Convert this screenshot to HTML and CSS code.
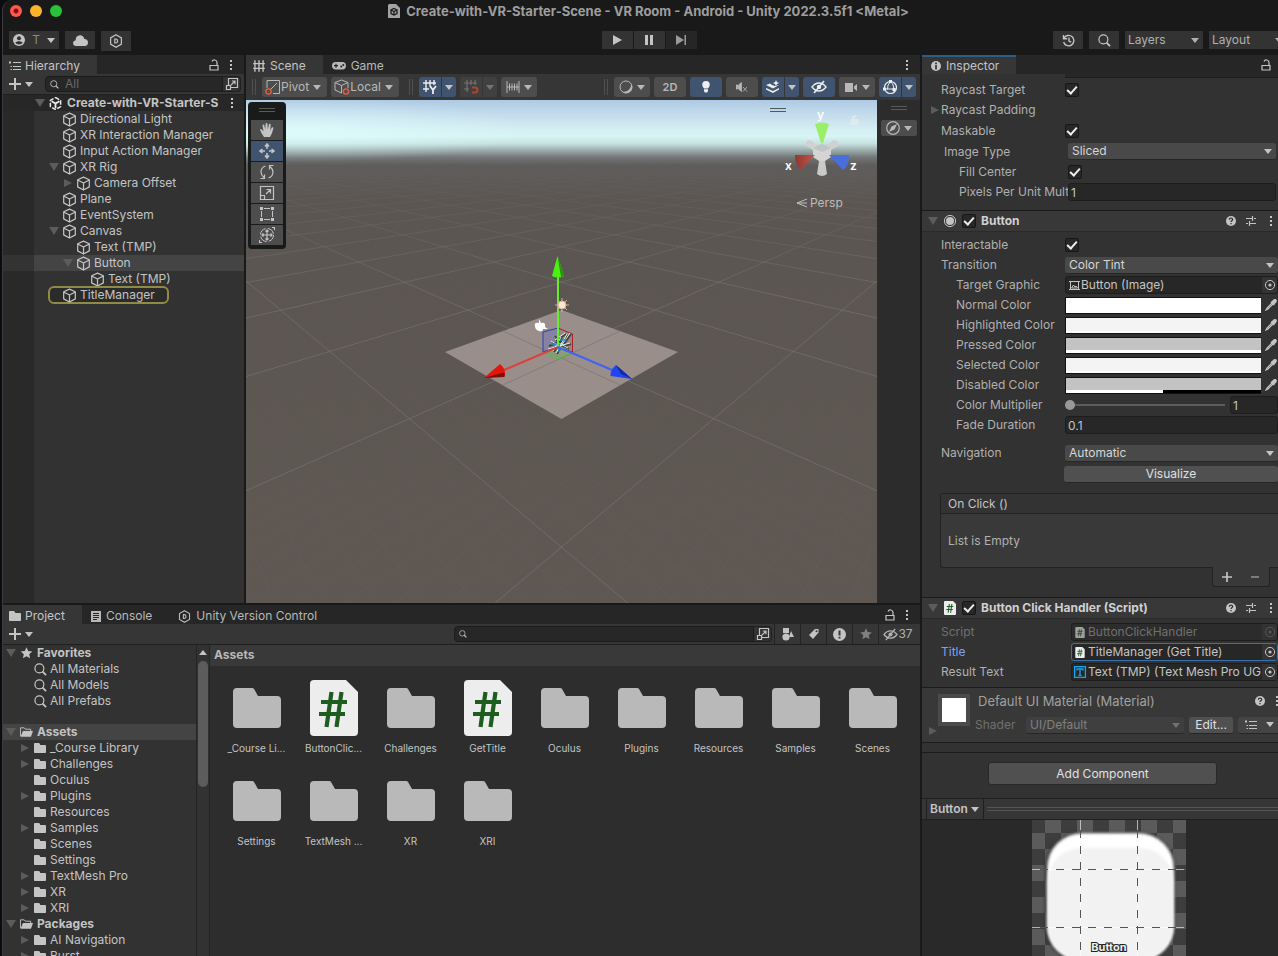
FILE: index.html
```html
<!DOCTYPE html>
<html lang="en">
<head>
<meta charset="utf-8">
<title>Create-with-VR-Starter-Scene - VR Room - Android - Unity 2022.3.5f1 &lt;Metal&gt;</title>
<link rel="stylesheet" href="styles.css">
</head>
<body>
<svg class="sprite" aria-hidden="true">
  <symbol id="cube" viewBox="0 0 16 16"><path d="M8 1.2 14.2 4v7.6L8 15 1.8 11.6V4zM1.8 4.2 8 7.4l6.200-3.200M8 7.400V15" fill="none" stroke="currentColor" stroke-width="1.300" stroke-linejoin="round"/></symbol>
  <symbol id="folder" viewBox="0 0 48 40"><path d="M4 0h15q1.500 0 2.200 1.300L25 8h19q4 0 4 4v24q0 4-4 4H4q-4 0-4-4V4q0-4 4-4z" fill="currentColor"/></symbol>
  <symbol id="folder-s" viewBox="0 0 12 10"><path d="M.8 0h4.400l1.200 2H11.200q.8 0 .8.800v6.400q0 .8-.8.800H.8Q0 10 0 9.200V.8Q0 0 .8 0z" fill="currentColor"/></symbol>
  <symbol id="folder-open" viewBox="0 0 14 11"><path d="M.5 10V1h4l1.200 1.500H11.500V4.500" fill="none" stroke="currentColor"/><path d="M3.200 4.500H14L11.800 10.500H.5z" fill="currentColor"/></symbol>
  <symbol id="script" viewBox="0 0 48 56"><path d="M4 0h32l12 12v40q0 4-4 4H4q-4 0-4-4V4q0-4 4-4z" fill="#ededed"/><path d="M21.500 12 16.500 47M31.500 12l-5 35M11 22h26M9 34h26" stroke="#1e5d20" stroke-width="4.200" fill="none"/></symbol>
  <symbol id="lens" viewBox="0 0 14 14"><circle cx="5.800" cy="5.800" r="4.800" fill="none" stroke="currentColor" stroke-width="1.300"/><path d="M9.200 9.200 13 13" stroke="currentColor" stroke-width="2"/></symbol>
  <symbol id="plus" viewBox="0 0 12 12"><path d="M6 0v12M0 6h12" stroke="currentColor" stroke-width="2"/></symbol>
  <symbol id="lock" viewBox="0 0 10 12"><path d="M1 6.500h8v4.500H1z M8 6V3.400A2.600 2.600 0 0 0 3 2.600" fill="none" stroke="currentColor" stroke-width="1.200"/></symbol>
  <symbol id="dots" viewBox="0 0 4 12"><path d="M1 1h2v2H1zM1 5h2v2H1zM1 9h2v2H1z" fill="currentColor"/></symbol>
  <symbol id="list" viewBox="0 0 12 10"><path d="M4 1.500h8M4 5.500h8M4 8.500h8M0 1.500h2M1.500 5.500h1.500M1.500 8.500h1.500M1 0v3" stroke="currentColor"/></symbol>
  <symbol id="pick" viewBox="0 0 14 14"><path d="M3.500 8V1.500h9v9H6M1.500 8.500h4v4h-4zM6 8l4-4M6.800 4H10v3.200" fill="none" stroke="currentColor" stroke-width="1.200"/></symbol>
  <symbol id="grid" viewBox="0 0 12 12"><path d="M2.500 1v10M6 1v10M9.500 1v10M1 4h10M1 8h10" stroke="currentColor" stroke-width="1.200"/></symbol>
  <symbol id="unity" viewBox="0 0 14 14"><path d="M7 .5 12.500 3.700v6.600L7 13.500 1.500 10.300V3.700z" fill="none" stroke="currentColor" stroke-width="1.600" stroke-dasharray="4.600 1.700"/><path d="M7 7V12M7 7 2.800 4.600M7 7l4.200-2.400" stroke="currentColor" stroke-width="2"/></symbol>
  <symbol id="hexd" viewBox="0 0 14 14"><path d="M7 .8 12.400 3.900v6.200L7 13.200 1.600 10.100V3.900z" fill="none" stroke="currentColor" stroke-width="1.200"/><path d="M5.800 5H7q1.600.2 1.600 2T7 9H5.800z" fill="none" stroke="currentColor" stroke-width="1.200"/></symbol>
  <symbol id="help" viewBox="0 0 12 12"><circle cx="6" cy="6" r="5" fill="currentColor"/><path d="M4.300 4.800Q4.400 3.200 6 3.200t1.700 1.300Q7.700 5.300 6.600 5.900 6 6.300 6 7.100M6 8v1.300" fill="none" stroke="#353535" stroke-width="1.300"/></symbol>
  <symbol id="sliders" viewBox="0 0 12 12"><path d="M1 3.500h6M9 3.500h2M7.500 1v5M1 8.500h2M5 8.500h6M4.500 6v5" stroke="currentColor" stroke-width="1.200"/></symbol>
  <symbol id="target" viewBox="0 0 12 12"><circle cx="6" cy="6" r="4.600" fill="none" stroke="currentColor"/><circle cx="6" cy="6" r="1.600" fill="currentColor"/></symbol>
  <symbol id="dropper" viewBox="0 0 12 12"><path d="M7.500 2.500 9 1q1-.8 1.800 0t0 1.800L9.500 4.300z M6 2.800l3.300 3.300" fill="currentColor" stroke="currentColor" stroke-width="1.400"/><path d="M7 4 2 9 1 11l2-1 5-5" fill="none" stroke="currentColor" stroke-width="1.200"/></symbol>
  <symbol id="star" viewBox="0 0 12 12"><path d="m6 .3 1.700 3.800 4.100.4-3.100 2.700.9 4.100L6 9.200l-3.600 2.100.9-4.100L.2 4.500l4.100-.4z" fill="currentColor"/></symbol>
  <symbol id="eye" viewBox="0 0 16 14"><path d="M1 7q3-4 7-4t7 4q-3 4-7 4T1 7z" fill="none" stroke="currentColor" stroke-width="1.400"/><circle cx="8" cy="7" r="2.200" fill="currentColor"/><path d="M3 13 13 1" stroke="currentColor" stroke-width="1.500"/></symbol>
</svg>

<div class="window">
  <header class="titlebar">
    <div class="lights"><i class="light red"></i><i class="light amber"></i><i class="light green"></i></div>
    <h1><svg width="12" height="14" viewBox="0 0 12 14"><path d="M1 0h7l4 4v10H0V1z" fill="#a3a3a3"/><path d="M6 4.500 9 6v3.500L6 11 3 9.500V6zM6 7.500V11M3 6l3 1.500L9 6" fill="none" stroke="#1c1c1c" stroke-width="1.300"/></svg>Create-with-VR-Starter-Scene - VR Room - Android - Unity 2022.3.5f1 &lt;Metal&gt;</h1>
  </header>

  <div class="mainbar">
    <div class="group">
      <button class="mb account"><svg width="12" height="12" viewBox="0 0 12 12"><circle cx="6" cy="6" r="6" fill="currentColor"/><circle cx="6" cy="4.300" r="2" fill="#333"/><path d="M2.200 8.800Q4 6.800 6 7.300q2-.5 3.800 1.500Q8.300 10.600 6 10.600T2.200 8.800z" fill="#333"/></svg><span>T</span><i class="caret"></i></button>
      <button class="mb" aria-label="Cloud"><svg width="15" height="11" viewBox="0 0 15 11"><path d="M3.500 11Q0 10.800 0 8q0-2.300 2.600-2.800Q2.800.5 7 .3q3.400 0 4.300 3.600Q15 4.300 15 7.500q0 3.300-3.200 3.500z" fill="currentColor"/></svg></button>
      <button class="mb tall" aria-label="Version Control"><svg width="14" height="14"><use href="#hexd"/></svg></button>
    </div>
    <div class="play">
      <button class="mb" aria-label="Play"><svg width="9" height="10" viewBox="0 0 9 10"><path d="M0 0v10l9-5z" fill="currentColor"/></svg></button>
      <button class="mb" aria-label="Pause"><svg width="8" height="10" viewBox="0 0 8 10"><path d="M0 0h3v10H0zM5 0h3v10H5z" fill="currentColor"/></svg></button>
      <button class="mb dim" aria-label="Step"><svg width="10" height="10" viewBox="0 0 10 10"><path d="M0 0v10l8-5zM8.500 0H10v10H8.500z" fill="currentColor"/></svg></button>
    </div>
    <div class="group end">
      <button class="mb" aria-label="Undo History"><svg width="13" height="13" viewBox="0 0 13 13"><path d="M2 4.200A5.200 5.200 0 1 1 1.600 8M1.500 1v3.700h3.700M7 3.500V7l2.200 1.200" fill="none" stroke="currentColor" stroke-width="1.400"/></svg></button>
      <button class="mb" aria-label="Search"><svg width="13" height="13"><use href="#lens"/></svg></button>
      <button class="mb menu">Layers<i class="caret"></i></button>
      <button class="mb menu">Layout<i class="caret"></i></button>
    </div>
  </div>

  <div class="workspace">
    <main class="left">
      <div class="upper">
        <section class="panel hierarchy">
          <div class="tabs"><button class="tab on"><svg width="12" height="10"><use href="#list"/></svg>Hierarchy</button>
            <span class="tabtools"><svg width="10" height="12"><use href="#lock"/></svg><svg width="4" height="12"><use href="#dots"/></svg></span></div>
          <div class="bar">
            <button class="add" aria-label="Create"><svg width="12" height="12"><use href="#plus"/></svg><i class="caret"></i></button>
            <label class="search"><svg width="9" height="9"><use href="#lens"/></svg><input type="text" placeholder="All" aria-label="Search hierarchy"></label>
            <button class="pickbtn" aria-label="Pick"><svg width="14" height="14"><use href="#pick"/></svg></button>
          </div>
          <div class="scenerow"><i class="down"></i><svg width="13" height="13"><use href="#unity"/></svg><b>Create-with-VR-Starter-S</b><svg width="4" height="12"><use href="#dots"/></svg></div>
          <ul class="tree objects">
            <li><svg><use href="#cube"/></svg>Directional Light</li>
            <li><svg><use href="#cube"/></svg>XR Interaction Manager</li>
            <li><svg><use href="#cube"/></svg>Input Action Manager</li>
            <li><i class="down"></i><svg><use href="#cube"/></svg>XR Rig</li>
            <li class="l1"><i class="right"></i><svg><use href="#cube"/></svg>Camera Offset</li>
            <li><svg><use href="#cube"/></svg>Plane</li>
            <li><svg><use href="#cube"/></svg>EventSystem</li>
            <li><i class="down"></i><svg><use href="#cube"/></svg>Canvas</li>
            <li class="l1"><svg><use href="#cube"/></svg>Text (TMP)</li>
            <li class="l1 sel"><i class="down"></i><svg><use href="#cube"/></svg>Button</li>
            <li class="l2"><svg><use href="#cube"/></svg>Text (TMP)</li>
            <li><span class="ping"><svg><use href="#cube"/></svg>TitleManager</span></li>
          </ul>
        </section>

        <section class="panel scene">
          <div class="tabs"><button class="tab on"><svg width="14" height="14"><use href="#grid"/></svg>Scene</button>
            <button class="tab"><svg width="14" height="8" viewBox="0 0 14 8"><rect width="14" height="7.500" rx="3.700" fill="currentColor"/><path d="M2 3.700h4M4 1.800v4" stroke="#262626" stroke-width="1.200"/><circle cx="9.300" cy="4.600" r="1" fill="#262626"/><circle cx="11.300" cy="3" r="1" fill="#262626"/></svg>Game</button>
            <span class="tabtools"><svg width="4" height="12"><use href="#dots"/></svg></span></div>
          <div class="scenebar">
            <i class="grip"></i>
            <button class="sb"><svg width="16" height="16" viewBox="0 0 16 16"><path d="M2 9V1.500h12.500v13H8M5 11l7-7" fill="none" stroke="currentColor"/><circle cx="3.500" cy="12.500" r="2.600" fill="none" stroke="#e8603c" stroke-width="1.400"/></svg>Pivot<i class="caret"></i></button>
            <button class="sb"><svg width="16" height="16" viewBox="0 0 16 16"><path d="M7.500 1 14 3.500V9M7.500 14 1 11V3.500L7.500 1M1 3.500 7.500 6.500 14 3.500M7.500 6.500V14" fill="none" stroke="currentColor"/><circle cx="12" cy="12.500" r="2.600" fill="none" stroke="#e8603c" stroke-width="1.400"/></svg>Local<i class="caret"></i></button>
            <i class="grip gap"></i>
            <span class="pair"><button class="sb on" aria-label="Grid"><svg width="16" height="16" viewBox="0 0 16 16"><path d="M4 1v12M8 1v6M12 1v5M1 4h13M1 10h6" stroke="currentColor" stroke-width="1.400"/><path d="m8 7 3 4 3-4M11 11v4" fill="none" stroke="currentColor" stroke-width="1.800"/></svg></button><button class="sb on car" aria-label="Grid options"><i class="caret"></i></button></span>
            <span class="pair off"><button class="sb" aria-label="Snap"><svg width="16" height="16" viewBox="0 0 16 16"><path d="M4 1v12M8 1v5M12 1v5M1 4h13M1 10h5" stroke="currentColor" stroke-width="1.200"/><path d="M9 8.500h3a2.500 2.500 0 0 1 0 5H9" fill="none" stroke="#a8492f" stroke-width="2"/></svg></button><button class="sb car" aria-label="Snap options"><i class="caret"></i></button></span>
            <button class="sb w36" aria-label="Increment"><svg width="14" height="14" viewBox="0 0 14 14"><path d="M1 1v12M13 1v12M3.500 3.500v7M6 3.500v7M8.500 3.500v7M11 3.500v7M1 7h12" stroke="currentColor"/></svg><i class="caret"></i></button>
            <i class="fill"></i>
            <i class="grip"></i>
            <button class="sb w36" aria-label="Shading"><svg width="14" height="14" viewBox="0 0 14 14"><circle cx="7" cy="7" r="6" fill="none" stroke="currentColor"/><path d="M11.500 3A6 6 0 1 1 3 11.500Q8 12.500 10.500 9T11.500 3z" fill="currentColor"/></svg><i class="caret"></i></button>
            <button class="sb w32"><b>2D</b></button>
            <button class="sb w32 on" aria-label="Lighting"><svg width="8" height="12" viewBox="0 0 8 12"><path d="M4 0q3.800.2 3.800 3.700Q7.800 5.500 6 7.500H2Q.2 5.500.2 3.700.2.200 4 0zM2 8.300h4v2L5 11.500H3L2 10.300z" fill="currentColor"/></svg></button>
            <button class="sb w32" aria-label="Audio"><svg width="12" height="10" viewBox="0 0 12 10"><path d="M0 3h1.500v4H0zM2.500 3 5.500.5v9L2.500 7zM7 5l4 4.500M11 5 7 9.500" fill="currentColor" stroke="currentColor" stroke-width=".8"/></svg></button>
            <span class="pair"><button class="sb on" aria-label="Effects"><svg width="14" height="14" viewBox="0 0 14 14"><path d="M0 5l4-1.500L6 5l3 1 4-1-6 3.500zM0 8l7 3 6-3v1.500L7 13 0 9.500z" fill="currentColor"/><path d="m10 0 1 2.300L13.300 3 11 4l-1 2-1-2-2.300-1L9 2.300z" fill="currentColor"/></svg></button><button class="sb on car" aria-label="Effects options"><i class="caret"></i></button></span>
            <button class="sb w32 on" aria-label="Visibility"><svg width="16" height="14"><use href="#eye"/></svg></button>
            <button class="sb w36" aria-label="Camera"><svg width="13" height="9" viewBox="0 0 13 9"><path d="M0 0h8v9H0zM9 3.500 12 1v7L9 5.500z" fill="currentColor"/></svg><i class="caret"></i></button>
            <span class="pair"><button class="sb on" aria-label="Gizmos"><svg width="15" height="15" viewBox="0 0 15 15"><circle cx="7.500" cy="7.500" r="6" fill="none" stroke="currentColor" stroke-width="1.200"/><path d="M1.500 9h12M7.500 1.500Q4 5 4.500 9.500M7.500 1.500Q11.500 5 11 12" fill="none" stroke="currentColor"/><path d="M6 0h3v3H6zM0 7.500h3v3H0zM9.500 8h3v3h-3z" fill="currentColor"/></svg></button><button class="sb on car" aria-label="Gizmo options"><i class="caret"></i></button></span>
          </div>
          <div class="sceneview">
            <div class="viewport">
              <svg class="world" viewBox="246 100 631 503" preserveAspectRatio="xMidYMid slice">
                <defs>
                  <linearGradient id="sky" gradientUnits="userSpaceOnUse" x1="0" y1="100" x2="0" y2="603">
                    <stop offset="0" stop-color="#aecae4"/><stop offset=".03" stop-color="#c4dcec"/><stop offset=".06" stop-color="#d6eff3"/><stop offset=".073" stop-color="#d6f4f5"/><stop offset=".087" stop-color="#c7e0e0"/><stop offset=".1" stop-color="#9cacac"/><stop offset=".114" stop-color="#727776"/><stop offset=".13" stop-color="#5f5d5c"/><stop offset=".2" stop-color="#5b5652"/><stop offset="1" stop-color="#5f5852"/>
                  </linearGradient>
                  <radialGradient id="glow" gradientUnits="userSpaceOnUse" cx="0" cy="0" r="1" gradientTransform="translate(300 130) scale(230 32)"><stop offset="0" stop-color="#dfffff" stop-opacity=".7"/><stop offset="1" stop-color="#dfffff" stop-opacity="0"/></radialGradient>
                  <linearGradient id="fade" gradientUnits="userSpaceOnUse" x1="0" y1="160" x2="0" y2="300"><stop offset="0" stop-color="#000"/><stop offset="1" stop-color="#fff"/></linearGradient>
                  <linearGradient id="fade2" gradientUnits="userSpaceOnUse" x1="0" y1="230" x2="0" y2="560"><stop offset="0" stop-color="#000"/><stop offset="1" stop-color="#fff"/></linearGradient>
                  <mask id="far" maskUnits="userSpaceOnUse" x="246" y="100" width="631" height="503"><path d="M246 100h631v503H246z" fill="url(#fade)"/></mask>
                  <mask id="near" maskUnits="userSpaceOnUse" x="246" y="100" width="631" height="503"><path d="M246 100h631v503H246z" fill="url(#fade2)"/></mask>
                  <linearGradient id="gx"><stop offset="0" stop-color="#8c3a31"/><stop offset="1" stop-color="#c95448"/></linearGradient>
                </defs>
                <path d="M-400 0h1900v900H-400z" fill="url(#sky)"/>
                <path d="M246 100h631v66H246z" fill="url(#glow)"/>
                <g mask="url(#near)"><path id="minor" fill="none" stroke="#7b7774" stroke-width="1" opacity=".13"/></g>
                <g mask="url(#far)"><path id="major" fill="none" stroke="#7b7774" stroke-width="1" opacity=".6"/></g>
                <path d="M561.500 310 678 352 561.500 419 445 352z" fill="#9a8e8b"/>
                <path d="M503 331 620 385M620 331 503 385" stroke="#857b78"/>
                <path d="M543 332 558 328 558 347 543 352z" fill="#7176b5" fill-opacity=".5" stroke="#2a3fc0"/>
                <path d="M558 328 572.500 334V352L558 347" fill="#a56a70" fill-opacity=".3" stroke="#a81f25"/>
                <path d="M546 353 558 347 571 353 558 359z" fill="#7fa777" fill-opacity=".6" stroke="#4cc32a"/>
                <path d="M556 341 566 334M568 335 557 354M571 334 562 347M549 350 571 344M552 342 567 351M549 346 562 341M554 352 562 338M560 344 569 349M555 336 562 345" fill="none" stroke="#3e4742" stroke-width="2"/>
                <path d="M555 340 565 333M567 334 556 353M570 333 561 346M548 349 570 343M551 341 566 350M553 351 561 337M559 343 568 348" fill="none" stroke="#d8efe6"/>
                <path d="M551 344h8v8M560 340h6" fill="none" stroke="#258ddc" stroke-width="1.500"/>
                <path d="M558 347V277" stroke="#63ee2b" stroke-width="2"/><path d="M557.500 256 564 276q-6 3-12 0z" fill="#4bf013"/><path d="M557.500 256 564 276l-3 1z" fill="#2b8f10"/>
                <path d="m558 347-54 23" stroke="#d9423c" stroke-width="2"/><path d="M484 378 500 364q6 5 5 12z" fill="#e2160c"/><path d="m484 378 20-5.500q1 3 .5 4.500z" fill="#7c0e0a"/>
                <path d="m558 347 54 23" stroke="#4263ee" stroke-width="2"/><path d="M632 379 616 365q-6 5-5.500 11z" fill="#1f45f5"/><path d="m632 379-16-14 5 9z" fill="#132a9c"/>
                <g stroke="#cdb09c" fill="#ffe6cd"><path d="M562 298v14M555 305h14M557 300l10 10M567 300l-10 10" /><circle cx="562" cy="305" r="4"/></g>
                <path d="M535 326q-1-4 4-3l0-4 2 4q5-1 4 4l3 2-5 0q0 3-4 2t-4-5z" fill="#fff"/>
                <path d="M770 108.500h16M770 111.500h16" stroke="#4d5a60"/>
                <g>
                  <path d="M806 142q4-4 7 0l7 6-3 5-7-5q-5-1-4-6z" fill="#d0d2d2"/><path d="M838 142q-4-4-7 0l-7 6 3 5 7-5q5-1 4-6z" fill="#d0d2d2"/>
                  <path d="M813 148 822 144l9 4v9l-9 6-9-6z" fill="#d4d4d4"/><path d="M813 148 822 144l9 4-9 4z" fill="#bfc4c4"/>
                  <path d="M819 161h6l2 13q-5 4-10 0z" fill="#c9caca"/>
                  <path d="M815 124q7-3 14 0l-6 19h-2z" fill="#9bee68"/>
                  <path d="M795 155h20l-14 15q-6-4-6-15z" fill="url(#gx)"/><path d="M849 155h-20l14 15q6-4 6-15z" fill="#4a6fdc"/>
                </g>
                <path d="M851 119.500h7v5h-7zM852.500 119v-2.500q2-2 4 0" fill="#e9eeee" stroke="#e9eeee" opacity=".7"/>
                <g class="axis"><text x="817" y="119">y</text><text x="785" y="170">x</text><text x="850" y="170">z</text></g>
                <path d="M807 199 797 203l10 4M797 203h10" fill="none" stroke="#c0bfbe"/>
                <text class="persp" x="810" y="207">Persp</text>
              </svg>
              <div class="tools">
                <i class="hgrip"></i>
                <button aria-label="View"><svg width="16" height="16" viewBox="0 0 16 16"><path d="M5 15Q2 11 1 7.500q.8-1 1.800 0L4.500 9.500 3.500 3q.8-1 1.700 0L6.300 7.500 6.600 1.500q.9-1 1.800 0l.4 6L10 2q1-.8 1.700.2L11.300 8.500l1.500-3q1-.7 1.700.2Q13.500 11 11 15z" fill="currentColor"/></svg></button>
                <button class="on" aria-label="Move"><svg width="16" height="16" viewBox="0 0 16 16"><path d="M8 2v4M8 10v4M2 8h4M10 8h4M6 3.500 8 1l2 2.500M6 12.500 8 15l2-2.500M3.500 6 1 8l2.500 2M12.500 6 15 8l-2.500 2" fill="none" stroke="currentColor" stroke-width="1.500"/></svg></button>
                <button aria-label="Rotate"><svg width="16" height="16" viewBox="0 0 16 16"><path d="M6.500 2Q2 3.500 2 8q0 3 3 5.500M9.500 14q4.500-1.500 4.500-6 0-3-3-5.500M1.500 14.500H5.500v-4M14.500 1.500H10.500v4" fill="none" stroke="currentColor" stroke-width="1.200"/></svg></button>
                <button aria-label="Scale"><svg width="16" height="16" viewBox="0 0 16 16"><path d="M1.500 1.500h13v13h-13zM1.500 10.500h4v4M7 9l4.500-4.500M7.500 4.500h4v4" fill="none" stroke="currentColor" stroke-width="1.200"/></svg></button>
                <button aria-label="Rect"><svg width="16" height="16" viewBox="0 0 16 16"><path d="M1 1h3v3H1zM12 1h3v3h-3zM1 12h3v3H1zM12 12h3v3h-3z" fill="currentColor"/><path d="M5 2.500h6M5 13.500h6M2.500 5v6M13.500 5v6" stroke="currentColor"/></svg></button>
                <button aria-label="Transform"><svg width="16" height="16" viewBox="0 0 16 16"><circle cx="8" cy="8" r="6.500" fill="none" stroke="currentColor" stroke-dasharray="8 2.200"/><path d="M8 3v10M3 8h10M6.500 4.500 8 3l1.500 1.500M6.500 11.500 8 13l1.500-1.500M4.500 6.500 3 8l1.500 1.500M11.500 6.500 13 8l-1.500 1.500M13 .5h2.500V3M.5 13v2.500H3" fill="none" stroke="currentColor" stroke-width="1.200"/></svg></button>
              </div>
            </div>
            <aside class="rail"><i class="hgrip"></i><button class="sb" aria-label="Orientation"><svg width="14" height="14" viewBox="0 0 14 14"><circle cx="7" cy="7" r="6.300" fill="none" stroke="currentColor" stroke-width="1.200"/><path d="M11 3 8.500 8.500 3 11 5.500 5.500z" fill="currentColor"/></svg><i class="caret"></i></button></aside>
          </div>
        </section>
      </div>

      <section class="panel project">
        <div class="tabs">
          <button class="tab on"><svg width="12" height="10"><use href="#folder-s"/></svg>Project</button>
          <button class="tab"><svg width="10" height="11" viewBox="0 0 10 11"><path d="M0 0h10v11H0z" fill="currentColor"/><path d="M2 2.500h6M2 4.500h6M2 6.500h6M2 8.500h4" stroke="#262626"/></svg>Console</button>
          <button class="tab vc"><svg width="13" height="13"><use href="#hexd"/></svg>Unity Version Control</button>
          <span class="tabtools"><svg width="10" height="12"><use href="#lock"/></svg><svg width="4" height="12"><use href="#dots"/></svg></span>
        </div>
        <div class="bar">
          <button class="add" aria-label="Create asset"><svg width="12" height="12"><use href="#plus"/></svg><i class="caret"></i></button>
          <i class="fill"></i>
          <label class="search wide"><svg width="8" height="8"><use href="#lens"/></svg><input type="text" aria-label="Search assets"></label>
          <button class="pickbtn" aria-label="Pick"><svg width="14" height="14"><use href="#pick"/></svg></button>
          <div class="filters">
            <button aria-label="Type"><svg width="12" height="13" viewBox="0 0 12 13"><path d="M1 0h6v5H1zM9 3l3 6H7z" fill="currentColor"/><circle cx="4" cy="9" r="3.600" fill="currentColor"/></svg></button>
            <button aria-label="Label"><svg width="12" height="12" viewBox="0 0 12 12"><path d="M7 1h3.500v3.500L5 11 1 7z" fill="currentColor"/><circle cx="8.500" cy="3.200" r="1" fill="#363636"/></svg></button>
            <button aria-label="Log"><svg width="13" height="13" viewBox="0 0 13 13"><circle cx="6.500" cy="6.500" r="6.500" fill="currentColor"/><path d="M6.500 2.500v5M6.500 8.800v1.800" stroke="#363636" stroke-width="2"/></svg></button>
            <button class="grey" aria-label="Favorite"><svg width="12" height="12"><use href="#star"/></svg></button>
            <button class="hidden-count"><svg width="15" height="13"><use href="#eye"/></svg>37</button>
          </div>
        </div>
        <div class="browser">
          <ul class="tree folders">
            <li class="root"><i class="down"></i><svg><use href="#star"/></svg>Favorites</li>
            <li class="query"><svg><use href="#lens"/></svg>All Materials</li>
            <li class="query"><svg><use href="#lens"/></svg>All Models</li>
            <li class="query"><svg><use href="#lens"/></svg>All Prefabs</li>
            <li class="root sel second"><i class="down"></i><svg><use href="#folder-open"/></svg>Assets</li>
            <li><i class="right"></i><svg><use href="#folder-s"/></svg>_Course Library</li>
            <li><i class="right"></i><svg><use href="#folder-s"/></svg>Challenges</li>
            <li><svg><use href="#folder-s"/></svg>Oculus</li>
            <li><i class="right"></i><svg><use href="#folder-s"/></svg>Plugins</li>
            <li><svg><use href="#folder-s"/></svg>Resources</li>
            <li><i class="right"></i><svg><use href="#folder-s"/></svg>Samples</li>
            <li><svg><use href="#folder-s"/></svg>Scenes</li>
            <li><svg><use href="#folder-s"/></svg>Settings</li>
            <li><i class="right"></i><svg><use href="#folder-s"/></svg>TextMesh Pro</li>
            <li><i class="right"></i><svg><use href="#folder-s"/></svg>XR</li>
            <li><i class="right"></i><svg><use href="#folder-s"/></svg>XRI</li>
            <li class="root"><i class="down"></i><svg><use href="#folder-open"/></svg>Packages</li>
            <li><i class="right"></i><svg><use href="#folder-s"/></svg>AI Navigation</li>
            <li><i class="right"></i><svg><use href="#folder-s"/></svg>Burst</li>
          </ul>
          <div class="scroll"><i class="up"></i><i class="thumb"></i></div>
          <div class="assets">
            <div class="crumb">Assets</div>
            <div class="items">
              <figure><svg class="fo"><use href="#folder"/></svg><figcaption>_Course Li...</figcaption></figure>
              <figure><svg class="sc"><use href="#script"/></svg><figcaption>ButtonClic...</figcaption></figure>
              <figure><svg class="fo"><use href="#folder"/></svg><figcaption>Challenges</figcaption></figure>
              <figure><svg class="sc"><use href="#script"/></svg><figcaption>GetTitle</figcaption></figure>
              <figure><svg class="fo"><use href="#folder"/></svg><figcaption>Oculus</figcaption></figure>
              <figure><svg class="fo"><use href="#folder"/></svg><figcaption>Plugins</figcaption></figure>
              <figure><svg class="fo"><use href="#folder"/></svg><figcaption>Resources</figcaption></figure>
              <figure><svg class="fo"><use href="#folder"/></svg><figcaption>Samples</figcaption></figure>
              <figure><svg class="fo"><use href="#folder"/></svg><figcaption>Scenes</figcaption></figure>
              <figure><svg class="fo"><use href="#folder"/></svg><figcaption>Settings</figcaption></figure>
              <figure><svg class="fo"><use href="#folder"/></svg><figcaption>TextMesh ...</figcaption></figure>
              <figure><svg class="fo"><use href="#folder"/></svg><figcaption>XR</figcaption></figure>
              <figure><svg class="fo"><use href="#folder"/></svg><figcaption>XRI</figcaption></figure>
            </div>
          </div>
        </div>
      </section>
    </main>

    <aside class="panel inspector">
      <div class="tabs"><button class="tab on focus"><svg width="10" height="10" viewBox="0 0 10 10"><circle cx="5" cy="5" r="5" fill="currentColor"/><path d="M5 1.500v1.700M5 4v4.500" stroke="#363636" stroke-width="1.700"/></svg>Inspector</button><span class="tabtools"><svg width="10" height="12"><use href="#lock"/></svg></span></div>
      <div class="props image">
        <div class="cutoff"></div>
        <div class="row"><label for="rt">Raycast Target</label><input id="rt" type="checkbox" checked></div>
        <div class="row fold"><i class="right"></i><label>Raycast Padding</label></div>
        <div class="row"><label for="mk">Maskable</label><input id="mk" type="checkbox" checked></div>
        <div class="row it"><label for="ity">Image Type</label><span class="select"><select id="ity"><option>Sliced</option></select></span></div>
        <div class="row i2"><label for="fc">Fill Center</label><input id="fc" type="checkbox" checked></div>
        <div class="row i2"><label for="pp">Pixels Per Unit Multiplier</label><input id="pp" type="text" value="1"></div>
      </div>

      <div class="comp"><i class="down"></i><svg width="14" height="14" viewBox="0 0 14 14"><circle cx="7" cy="7" r="5.600" fill="none" stroke="#c4c4c4"/><circle cx="7" cy="7" r="4" fill="#c4c4c4"/></svg><input id="cb" type="checkbox" checked><label for="cb">Button</label><span class="ct"><svg width="12" height="12"><use href="#help"/></svg><svg width="12" height="12"><use href="#sliders"/></svg><svg width="4" height="12"><use href="#dots"/></svg></span></div>
      <div class="props">
        <div class="row"><label for="ia">Interactable</label><input id="ia" type="checkbox" checked></div>
        <div class="row"><label for="tr">Transition</label><span class="select"><select id="tr"><option>Color Tint</option></select></span></div>
        <div class="row i1"><label>Target Graphic</label><button class="obj"><svg width="11" height="11" viewBox="0 0 11 11"><path d="M1.500 1.500h8v8h-8zM0 1.500h11M0 9.500h11M2.500 8l2-3 1.500 2 1-1 1.500 2z" fill="none" stroke="#c4c4c4"/></svg><span>Button (Image)</span><em><svg width="12" height="12"><use href="#target"/></svg></em></button></div>
        <div class="row i1"><label>Normal Color</label><button class="color white" aria-label="Normal Color"></button><svg class="drop"><use href="#dropper"/></svg></div>
        <div class="row i1"><label>Highlighted Color</label><button class="color pale" aria-label="Highlighted Color"></button><svg class="drop"><use href="#dropper"/></svg></div>
        <div class="row i1"><label>Pressed Color</label><button class="color mid" aria-label="Pressed Color"></button><svg class="drop"><use href="#dropper"/></svg></div>
        <div class="row i1"><label>Selected Color</label><button class="color pale" aria-label="Selected Color"></button><svg class="drop"><use href="#dropper"/></svg></div>
        <div class="row i1"><label>Disabled Color</label><button class="color mid half" aria-label="Disabled Color"></button><svg class="drop"><use href="#dropper"/></svg></div>
        <div class="row i1"><label for="cm">Color Multiplier</label><input id="cm" type="range" min="1" max="5" value="1"><input class="num" type="text" value="1" aria-label="Color Multiplier value"></div>
        <div class="row i1"><label for="fd">Fade Duration</label><input id="fd" type="text" value="0.1"></div>
        <div class="row nav"><label for="nv">Navigation</label><span class="select"><select id="nv"><option>Automatic</option></select></span></div>
        <div class="row"><label></label><button class="btn">Visualize</button></div>
        <div class="event"><div class="eh">On Click ()</div><div class="eb">List is Empty</div></div>
        <div class="ef"><button aria-label="Add"><svg width="10" height="10"><use href="#plus"/></svg></button><button class="dimb" aria-label="Remove"><svg width="8" height="2" viewBox="0 0 8 2"><path d="M0 0h8v2H0z" fill="currentColor"/></svg></button></div>
      </div>

      <div class="comp"><i class="down"></i><svg width="14" height="14"><use href="#script"/></svg><input id="cc" type="checkbox" checked><label for="cc">Button Click Handler (Script)</label><span class="ct"><svg width="12" height="12"><use href="#help"/></svg><svg width="12" height="12"><use href="#sliders"/></svg><svg width="4" height="12"><use href="#dots"/></svg></span></div>
      <div class="props refs">
        <div class="row disabled"><label>Script</label><button class="obj"><svg width="14" height="11"><use href="#script"/></svg><span>ButtonClickHandler</span><em><svg width="12" height="12"><use href="#target"/></svg></em></button></div>
        <div class="row active"><label>Title</label><button class="obj"><svg width="14" height="11"><use href="#script"/></svg><span>TitleManager (Get Title)</span><em><svg width="12" height="12"><use href="#target"/></svg></em></button></div>
        <div class="row"><label>Result Text</label><button class="obj"><svg width="14" height="12" viewBox="-1 0 14 12"><path d="M.6.6h10.800v10.800H.6zM3 4.500V3h6v1.500M6 3v6.500M4.500 9.400h3" fill="none" stroke="#12a5ee" stroke-width="1.300"/></svg><span>Text (TMP) (Text Mesh Pro UGUI)</span><em><svg width="12" height="12"><use href="#target"/></svg></em></button></div>
      </div>

      <div class="material">
        <div class="thumbcol"><i class="swatch"></i><i class="right"></i></div>
        <div class="matbody">
          <div class="mt"><span>Default UI Material (Material)</span><svg width="12" height="12"><use href="#help"/></svg><svg width="4" height="12"><use href="#dots"/></svg></div>
          <div class="ms"><label for="sh">Shader</label><span class="select"><select id="sh" disabled><option>UI/Default</option></select></span><button class="btn">Edit...</button><button class="btn lst" aria-label="Presets"><svg width="12" height="10"><use href="#list"/></svg><i class="caret"></i></button></div>
        </div>
      </div>
      <div class="addc"><button class="btn">Add Component</button></div>
      <div class="pvbar"><button>Button<i class="caret"></i></button><i class="lines"></i></div>
      <div class="preview">
        <svg width="154" height="154" viewBox="0 0 154 154">
          <defs><pattern id="chk" width="32" height="32" patternUnits="userSpaceOnUse" x="-3" y="-3"><path d="M0 0h32v32H0z" fill="#5b5b5b"/><path d="M0 0h16v16H0zM16 16h16v16H16z" fill="#3d3d3d"/></pattern>
          <filter id="soft" x="-20%" y="-20%" width="140%" height="140%"><feGaussianBlur stdDeviation="1.500"/></filter></defs>
          <path d="M0 0h154v154H0z" fill="url(#chk)"/>
          <rect x="13" y="12" width="130" height="130" rx="36" fill="#222" filter="url(#soft)"/>
          <rect x="15" y="13" width="127" height="128" rx="35" fill="#fff" filter="url(#soft)"/>
          <rect x="16" y="28" width="125" height="111" rx="33" fill="#f2f2f2" filter="url(#soft)"/>
          <path d="M48.500 0v154M105.500 0v154M0 49.500h154M0 107.500h154" stroke="#fff" stroke-opacity=".6"/>
          <path d="M48.500 10v144M105.500 10v144M8 49.500h146M8 107.500h146" stroke="#555" stroke-dasharray="8 8"/>
          <text x="77" y="131" class="pvname">Button</text>
        </svg>
      </div>
    </aside>
  </div>
</div>
<script src="grid.js"></script>
</body>
</html>
```

FILE: styles.css
```css
* { box-sizing: border-box; }
html, body { height: 100%; margin: 0; }
body { background: #0b0b12; color: #c4c4c4; font: 12px/16px Inter, "Liberation Sans", sans-serif; overflow: hidden; }
button, input, select { font: inherit; color: inherit; margin: 0; padding: 0; border: 0; background: none; border-radius: 0; outline: 0; }
button { display: flex; align-items: center; justify-content: center; white-space: nowrap; }
ul, h1, figure { margin: 0; padding: 0; list-style: none; }
svg { display: block; flex: none; }
.sprite { position: absolute; width: 0; height: 0; }
.fill { flex: 1; }
.caret { flex: none; border: 4px solid transparent; border-top: 5px solid currentColor; border-bottom: 0; }
.down { flex: none; border: 5px solid transparent; border-top: 8px solid #5c5c5c; border-bottom: 0; }
.right { flex: none; border: 4px solid transparent; border-left: 8px solid #5c5c5c; border-right: 0; }

.window { height: 100%; margin-left: 2px; border-left: 1px solid #3c3c3c; border-top-left-radius: 10px; background: #191919; display: flex; flex-direction: column; overflow: hidden; }
.titlebar { display: grid; grid-template-columns: 1fr auto 1fr; align-items: center; height: 22px; margin-right: -16px; }
.lights { display: flex; gap: 8px; padding-left: 7px; }
.light { width: 12px; height: 12px; border-radius: 50%; }
.red { background: radial-gradient(circle, #8c0f0c 2px, #ff5950 3px); }
.amber { background: #fdb32a; }
.green { background: #28c23a; }
h1 { display: flex; align-items: center; gap: 6px; font-size: 13px; font-weight: 700; color: #9e9e9e; white-space: nowrap; }

.mainbar { display: grid; grid-template-columns: 1fr auto 1fr; height: 33px; padding: 9px 30px 0 6px; margin-right: -40px; align-items: start; }
.group { display: flex; gap: 6px; }
.end { justify-content: flex-end; margin-right: 1px; }
.play { display: flex; gap: 1px; padding-left: 1px; }
.mb { width: 30px; height: 18px; background: #333; }
.play .mb { width: 31px; }
.mb.dim { background: #262626; color: #9a9a9a; }
.mb.tall { height: 20px; }
.mb.account { width: 50px; gap: 7px; color: #c4c4c4; }
.account span { color: #8a8a8a; }
.mb.menu { width: 78px; padding: 0 4px 0 3px; justify-content: space-between; color: #b0b0b0; }

.workspace { flex: 1; min-height: 0; display: flex; gap: 2px; }
.left { flex: 1; min-width: 0; display: flex; flex-direction: column; gap: 2px; }
.upper { flex: 0 0 548px; display: flex; gap: 2px; min-height: 0; }
.panel { background: #323232; display: flex; flex-direction: column; min-width: 0; min-height: 0; overflow: hidden; }
.hierarchy { flex: 0 0 241px; }
.scene { flex: 1; }
.project { flex: 1; }
.inspector { flex: 0 0 356px; }

.tabs { display: flex; flex: 0 0 19px; background: #262626; padding-right: 11px; }
.tab { gap: 5px; padding: 3px 13px 0 9px; color: #b8b8b8; }
.tab.on { background: #363636; gap: 4px; padding: 3px 17px 0 6px; color: #c4c4c4; }
.tab.on.focus { border-top: 2px solid #2c5d87; padding: 1px 17px 0 9px; gap: 5px; }
.tab.vc { padding-left: 13px; }
.tabtools { display: flex; align-items: center; gap: 10px; margin-left: auto; }
.inspector .tabs { padding-right: 7px; }
.bar { flex: 0 0 21px; display: flex; align-items: center; background: #363636; padding: 0 3px 0 6px; border-bottom: 1px solid #1f1f1f; }
.add { gap: 4px; margin-right: 12px; }
.search { flex: 1; min-width: 0; display: flex; align-items: center; gap: 6px; height: 16px; padding-left: 4px; background: #272727; border: 1px solid #1b1b1b; border-radius: 4px 0 0 4px; }
.search input { min-width: 0; flex: 1; }
.search input::placeholder { color: #6a6a6a; opacity: 1; }
.search.wide { flex: 0 0 300px; }
.pickbtn { width: 18px; height: 16px; border: 1px solid #1f1f1f; border-left: 0; border-radius: 0 4px 4px 0; background: #323232; }

.scenerow { flex: 0 0 16px; display: flex; align-items: center; background: #272727; padding: 0 10px 0 32px; border-bottom: 1px solid #3a3a3a; }
.scenerow b { margin: 0 auto 0 5px; font-weight: 700; white-space: nowrap; }
.scenerow svg:first-of-type { margin-left: 4px; color: #eee; }
.tree li { display: flex; align-items: center; height: 16px; white-space: nowrap; }
.objects { flex: 1; margin-top: -1px; background: linear-gradient(90deg, #292929 31px, #323232 31px); }
.objects li { padding-left: 59px; }
.objects svg { width: 15px; height: 15px; margin-right: 3px; }
.objects .l1 { padding-left: 73px; }
.objects .l2 { padding-left: 87px; }
.tree .down { margin: 0 3px 0 -13px; }
.tree .right { margin: 0 4px 0 -12px; }
.objects .sel { background: linear-gradient(90deg, #333 31px, #444 31px); }
.ping { display: flex; align-items: center; height: 18px; margin-left: -14px; padding: 0 12px; border: 2px solid #8f8a46; border-radius: 6px; background: #2b2b2b; }

.scenebar { flex: 0 0 26px; display: flex; align-items: center; gap: 4px; padding: 0 4px 0 6px; background: #363636; }
.grip { width: 4px; height: 16px; margin-right: 2px; border: solid #505050; border-width: 0 1px; }
.grip.gap { margin-left: 6px; }
.sb { height: 20px; background: #4d4d4d; border-radius: 3px; padding: 0 6px 0 3px; color: #b8b8b8; }
.sb .caret { margin-left: 4px; }
.sb.on { background: #40546f; color: #eee; }
.sb.w36 { width: 36px; padding: 0; }
.sb.w32 { width: 32px; padding: 0; }
.sb b { font-weight: 600; font-size: 11px; }
.pair { display: flex; gap: 1px; }
.pair .sb { width: 22px; padding: 0; border-radius: 3px 0 0 3px; }
.pair .sb.car { width: 14px; border-radius: 0 3px 3px 0; }
.car .caret { margin: 0; color: #c4c4c4; }
.off .sb { background: #404040; color: #737373; }
.off .sb .caret { color: #737373; }
.sceneview { flex: 1; display: flex; min-height: 0; background: #2c2c2c; }
.viewport { flex: 1; position: relative; min-width: 0; }
.world { width: 100%; height: 100%; }
.axis text { font: 600 12px Inter, sans-serif; fill: #fff; }
.persp { font: 12px Inter, sans-serif; fill: #bdbcbb; }
.tools { position: absolute; left: 2px; top: 2px; width: 38px; display: flex; flex-direction: column; gap: 1px; padding: 0 3px 4px; background: #191a1a; border-radius: 4px; }
.hgrip { width: 16px; height: 4px; margin: 6px auto 7px; border: solid #5a5a5a; border-width: 1px 0; }
.tools button { height: 20px; background: #4d4d4d; }
.tools button.on { background: #40546f; }
.rail { flex: 0 0 43px; padding: 0 3px 0 4px; }
.rail .sb { width: 36px; height: 16px; padding: 0; border-radius: 2px; }
.rail .hgrip { margin: 6px auto 10px; display: block; }

.filters { display: flex; align-self: stretch; margin: 0 -3px 0 2px; }
.filters button { width: 26px; border-left: 1px solid #232323; }
.filters .grey { color: #808080; }
.filters .hidden-count { width: 42px; padding-right: 3px; color: #b0b0b0; }
.browser { flex: 1; min-height: 0; display: flex; }
.folders { flex: 0 0 193px; overflow: hidden; }
.folders li { padding-left: 31px; }
.folders svg { width: 12px; height: 10px; margin-right: 4px; }
.folders .query svg { width: 13px; height: 13px; margin-right: 3px; }
.folders .root { padding-left: 17px; font-weight: 700; }
.folders .root svg { width: 13px; height: 12px; }
.folders .sel { background: #444; }
.folders .second { margin-top: 15px; }
.folders .down { margin: 0 4px 0 -14px; }
.folders .right { margin: 0 5px 0 -13px; }
.scroll { flex: 0 0 14px; border: solid #242424; border-width: 0 1px; padding: 5px 1px; display: flex; flex-direction: column; align-items: center; gap: 6px; }
.up { border: 4px solid transparent; border-bottom: 5px solid #c4c4c4; border-top: 0; }
.thumb { width: 10px; height: 126px; border-radius: 5px; background: #5c5c5c; }
.assets { flex: 1; min-width: 0; background: #2d2d2d; }
.crumb { height: 21px; padding: 2px 4px; font-weight: 700; background: #393939; color: #b8b8b8; }
.items { display: grid; grid-template-columns: repeat(auto-fill, 77px); grid-auto-rows: 93px; padding: 14px 4px 0 8px; }
figure { display: flex; flex-direction: column; align-items: center; }
.fo { width: 48px; height: 40px; margin: 8px 0; color: #b9b9b9; }
.sc { width: 48px; height: 56px; }
figcaption { margin-top: 5px; font-size: 10px; line-height: 14px; }

.props .row { display: flex; align-items: center; height: 20px; padding-left: 19px; }
.row label { flex: 0 0 124px; white-space: nowrap; overflow: hidden; color: #b0b0b0; }
.props { flex: none; }
.image { height: 136px; }
.cutoff { height: 4px; margin: 0 0 2px 143px; background: #272727; border-bottom: 1px solid #1c1c1c; }
.image .row:nth-child(4), .image .row:nth-child(5) { height: 21px; }
.props .row.fold { padding-left: 9px; }
.fold .right { margin-right: 2px; }
.props .it { padding-left: 22px; padding-right: 2px; }
.props .i2 { padding-left: 37px; padding-right: 2px; }
.i2 label { flex-basis: 109px; }
.props .i1 { padding-left: 34px; }
.i1 label { flex-basis: 109px; }
input[type=checkbox] { appearance: none; flex: none; width: 14px; height: 14px; background: #272727; border: 1px solid #171717; border-radius: 2px; display: flex; justify-content: center; }
input[type=checkbox]:checked::before { content: ""; width: 4px; height: 8px; border: solid #eee; border-width: 0 2px 2px 0; transform: rotate(42deg); }
.row input[type=text] { flex: 1; min-width: 0; height: 18px; padding: 0 2px; background: #272727; border: 1px solid #1d1d1d; border-radius: 3px; color: #c4c4c4; }
.select { flex: 1; min-width: 0; position: relative; }
.select select { appearance: none; display: block; width: 100%; height: 17px; padding: 0 4px; background: #494949; border-bottom: 1px solid #262626; border-radius: 3px; color: #d6d6d6; opacity: 1; }
.select::after { content: ""; position: absolute; right: 4px; top: 6px; border: 4px solid transparent; border-top: 5px solid #c4c4c4; border-bottom: 0; }
.comp { flex: 0 0 22px; display: flex; align-items: center; gap: 5px; padding: 0 5px 0 6px; background: #383838; border-top: 1px solid #1b1b1b; border-bottom: 1px solid #2a2a2a; }
.comp label { font-weight: 700; color: #d0d0d0; white-space: nowrap; }
.ct { display: flex; gap: 8px; margin-left: auto; }
.ct svg:last-child { margin-left: 4px; }
.comp + .props { padding-top: 3px; }
.obj { flex: 1; min-width: 0; height: 18px; padding-left: 3px; gap: 1px; background: #272727; border: 1px solid #1d1d1d; border-radius: 3px; justify-content: flex-start; overflow: hidden; color: #c4c4c4; }
.obj span { flex: 1; min-width: 0; overflow: hidden; text-align: left; }
.obj em { flex: 0 0 15px; align-self: stretch; display: flex; align-items: center; justify-content: center; background: #333; }
.refs .row label { flex-basis: 130px; }
.refs .obj { gap: 1px; padding-left: 1px; }
.disabled label, .row .obj:disabled { color: #707070; }
.disabled .obj { background: #2c2c2c; color: #707070; }
.row.disabled label { color: #707070; }
.disabled svg { opacity: .6; }
.row.active label { color: #7ba3f0; }
.active .obj { border-color: #3a72b0; }
.color { flex: 1; height: 17px; border: 1px solid #111; border-right: 0; }
.white { background: #fff; }
.pale { background: linear-gradient(#f4f4f4 13px, #fff 13px); }
.mid { background: linear-gradient(#c3c3c3 12px, #fff 12px); }
.mid.half { background: linear-gradient(#c3c3c3 12px, transparent 12px), linear-gradient(90deg, #fff 50%, #000 50%); }
.drop { width: 12px; height: 12px; margin: 0 1px 0 4px; }
input[type=range] { appearance: none; flex: 1; min-width: 0; height: 10px; }
input[type=range]::-webkit-slider-runnable-track { height: 2px; background: #5c5c5c; }
input[type=range]::-webkit-slider-thumb { appearance: none; width: 10px; height: 10px; margin-top: -4px; border-radius: 50%; background: #999; }
.row input.num { flex: 0 0 48px; margin-left: 5px; }
.props .nav { margin-top: 8px; }
.btn { height: 17px; padding: 0 6px; background: #505050; border-bottom: 1px solid #262626; border-radius: 3px; color: #e0e0e0; }
.row .btn { flex: 1; margin: 2px 0 0 -1px; }
.event { margin: 10px 0 0 18px; border: 1px solid #222; border-right: 0; border-radius: 3px 0 0 3px; background: #393939; }
.eh { height: 20px; padding: 2px 7px; background: #333; border-bottom: 1px solid #222; }
.eb { height: 53px; padding: 19px 7px; color: #b0b0b0; }
.ef { display: flex; width: 58px; height: 20px; margin: -1px 8px 10px auto; background: #393939; border: 1px solid #222; border-top: 0; border-radius: 0 0 3px 3px; }
.ef button { flex: 1; }
.dimb { color: #7c7c7c; }
.material { flex: 0 0 56px; margin-top: 5px; display: flex; background: #383838; border: solid #1b1b1b; border-width: 1px 0; }
.thumbcol { flex: 0 0 48px; display: flex; flex-direction: column; padding: 6px 0 0 16px; }
.swatch { flex: 0 0 32px; width: 32px; background: #fff; border: 4px solid #4a4a4a; }
.thumbcol .right { margin: 1px 0 0 -9px; align-self: flex-start; }
.matbody { flex: 1; min-width: 0; }
.mt { display: flex; align-items: center; gap: 9px; height: 26px; padding: 0 0 0 8px; margin-right: -1px; font-size: 13px; color: #a0a0a0; }
.mt span { flex: 1; white-space: nowrap; }
.mt svg { color: #c4c4c4; }
.ms { display: flex; align-items: center; height: 22px; padding-left: 5px; gap: 5px; color: #707070; }
.ms label { flex: 0 0 46px; }
.ms select { background: #3f3f3f; color: #808080; }
.ms .select::after { border-top-color: #707070; }
.ms .lst { width: 42px; margin-right: -2px; gap: 9px; background: #444; color: #c4c4c4; }
.addc { flex: 0 0 55px; padding: 19px 61px 0 66px; background: linear-gradient(#323232 9px, #1b1b1b 9px, #1b1b1b 10px, #323232 10px); }
.addc .btn { width: 100%; height: 23px; border: 1px solid #292929; }
.pvbar { flex: 0 0 22px; display: flex; align-items: center; padding-left: 4px; background: #363636; border: solid #1f1f1f; border-width: 1px 0; }
.pvbar button { height: 20px; padding: 0 4px 0 3px; gap: 3px; border: solid #1f1f1f; border-width: 0 1px; font-weight: 600; }
.lines { flex: 1; height: 4px; margin-left: 3px; border: solid #555; border-width: 1px 0; }
.preview { flex: 1; min-height: 0; background: #292929; display: flex; justify-content: center; padding-left: 18px; overflow: hidden; }
.pvname { font: 700 11px Inter, sans-serif; fill: #eee; stroke: #222; stroke-width: 2px; paint-order: stroke; text-anchor: middle; }
```

FILE: grid.js
```js
// Ground grid of the scene view: camera orbits the origin at 45 degrees yaw.
const FOCAL = 436, DIST = 26.6, PITCH = 0.457, CX = 561.5, CY = 351.5;

function project(x, z) {
  const side = (x - z) * Math.SQRT1_2;
  const ahead = (x + z) * Math.SQRT1_2;
  const depth = DIST + ahead * Math.cos(PITCH);
  return [CX + FOCAL * side / depth, CY - FOCAL * ahead * Math.sin(PITCH) / depth];
}

function gridPath(step, reach) {
  const near = -(DIST - 3) / Math.cos(PITCH) * Math.SQRT2;
  let d = "";
  for (let k = -reach; k <= reach; k += step) {
    const start = Math.max(-reach, near - k);
    if (start >= reach) continue;
    const a = project(k, start), b = project(k, reach);
    const c = project(start, k), e = project(reach, k);
    d += `M${a[0].toFixed(1)} ${a[1].toFixed(1)}L${b[0].toFixed(1)} ${b[1].toFixed(1)}`;
    d += `M${c[0].toFixed(1)} ${c[1].toFixed(1)}L${e[0].toFixed(1)} ${e[1].toFixed(1)}`;
  }
  return d;
}

document.getElementById("major").setAttribute("d", gridPath(10, 300));
document.getElementById("minor").setAttribute("d", gridPath(1, 60));
```
